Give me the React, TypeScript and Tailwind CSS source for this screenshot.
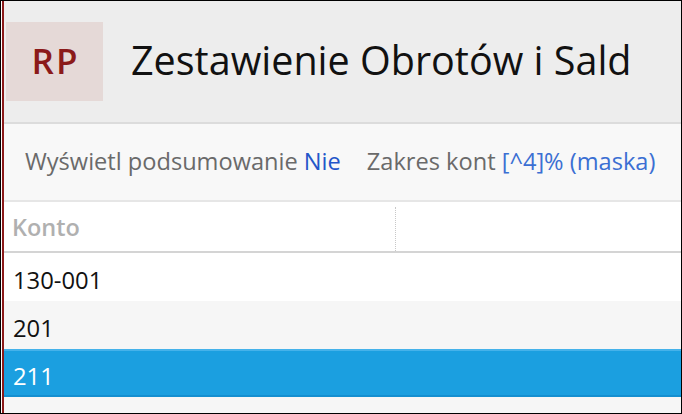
const rows = [
  { konto: "130-001", bg: "bg-white", selected: false },
  { konto: "201", bg: "bg-[#f6f6f6]", selected: false },
  { konto: "211", bg: "bg-[#1b9fe0]", selected: true },
];

export default function App() {
  return (
    <div className="w-[682px] h-[414px] overflow-hidden border border-black bg-white font-['Open_Sans',sans-serif]">
      <div className="flex h-full">
        <div className="w-px bg-white" />
        <div className="w-[2px] bg-[#8b1a1a]" />
        <div className="flex-1 flex flex-col min-w-0">
          <header className="h-[123px] shrink-0 bg-[#ededed] flex items-center border-b-2 border-[#dcdcdc]">
            <div className="ml-[2px] w-[97px] h-[79px] bg-[#e5d9d7] flex items-center justify-center">
              <span className="text-[35px] font-semibold text-[#8b1a1a] tracking-[2px] pl-[2px]">RP</span>
            </div>
            <h1 className="ml-[28px] text-[39.5px] text-[#111] leading-none pb-[2px]">
              Zestawienie Obrotów i Sald
            </h1>
          </header>

          <div className="h-[78px] shrink-0 bg-[#f8f8f8] border-b-2 border-[#e6e6e6] flex items-center pl-[21px] text-[23.6px] gap-[26px]">
            <span className="text-[#6a6a6a]">
              Wyświetl podsumowanie <span className="text-[#2356c9]">Nie</span>
            </span>
            <span className="text-[#6a6a6a]">
              Zakres kont <span className="text-[#3b6fd3]">[^4]% (maska)</span>
            </span>
          </div>

          <div className="h-[51px] shrink-0 flex border-b-2 border-[#d4d4d4] bg-white">
            <div className="w-[392px] flex items-center pl-[8px] pt-[3px] text-[23.5px] font-semibold text-[#b0b0b0] relative">
              Konto
              <div className="absolute right-0 top-[5px] bottom-0 border-r border-dotted border-[#c8c8c8]" />
            </div>
          </div>

          {rows.map((r) => (
            <div
              key={r.konto}
              className={`h-[48px] shrink-0 flex items-center pl-[9px] pt-[7px] text-[23.8px] ${r.bg} ${
                r.selected ? "text-white border-t-2 border-b-2 border-t-[#45b2ea] border-b-[#148fd0]" : "text-[#111]"
              }`}
            >
              {r.konto}
            </div>
          ))}
          <div className="flex-1 bg-[#f6f6f6]" />
        </div>
      </div>
    </div>
  );
}
